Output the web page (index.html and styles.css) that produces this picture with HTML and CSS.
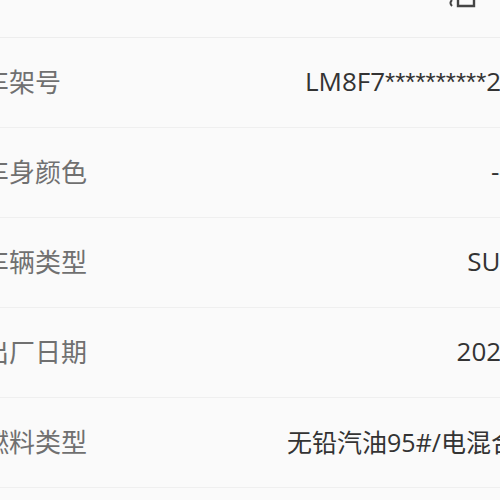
FILE: index.html
```html
<!DOCTYPE html>
<html lang="zh-CN">
<head>
    <meta charset="UTF-8">
    <meta name="viewport" content="width=device-width, initial-scale=1.0">
    <title>车辆信息</title>
    <link rel="stylesheet" href="styles.css">
</head>
<body>
    <div class="sheet">
        <!-- top of the previous row, mostly scrolled away -->
        <div class="top-row">
            <span class="top-icon">
                <svg width="32" height="10" viewBox="0 0 32 10">
                    <path d="M4 0 Q1 3 4 6" fill="none" stroke="#444" stroke-width="2"/>
                    <path d="M10 0 V6 H26 V0" fill="none" stroke="#444" stroke-width="2.4"/>
                </svg>
            </span>
        </div>

        <div class="info-row">
            <span class="label">车架号</span>
            <span class="value">LM8F7<span class="mask">**********</span>26</span>
        </div>
        <div class="info-row">
            <span class="label">车身颜色</span>
            <span class="value">---</span>
        </div>
        <div class="info-row">
            <span class="label">车辆类型</span>
            <span class="value">SUV</span>
        </div>
        <div class="info-row">
            <span class="label">出厂日期</span>
            <span class="value">2024</span>
        </div>
        <div class="info-row">
            <span class="label">燃料类型</span>
            <span class="value cjk">无铅汽油95#/电混合</span>
        </div>
    </div>
</body>
</html>
```

FILE: styles.css
```css
/* Page */
body {
    margin: 0;
    padding: 0;
    overflow: hidden;
    background-color: #fafafa;
    font-family: 'Open Sans', 'Noto Sans CJK SC', sans-serif;
}

/* List is wider than the window, so both edges get cut */
.sheet {
    margin-left: -17px;
    margin-right: -16px;
}

.top-row {
    height: 37px;
    border-bottom: 1px solid #ededed;
    display: flex;
    justify-content: flex-end;
    align-items: flex-start;
    padding-right: 36px;
}

.top-icon svg {
    display: block;
}

/* Rows */
.info-row {
    height: 90px;
    padding-bottom: 4px;
    box-sizing: border-box;
    border-bottom: 1px solid #efefef;
    display: flex;
    justify-content: space-between;
    align-items: center;
    font-size: 26px;
}

.label {
    color: #707070;
}

.value {
    color: #333333;
    white-space: nowrap;
}

.value.cjk {
    font-size: 25px;
}

/* masked part of the VIN: small raised stars */
.mask {
    font-family: 'Liberation Sans', sans-serif;
}
```
